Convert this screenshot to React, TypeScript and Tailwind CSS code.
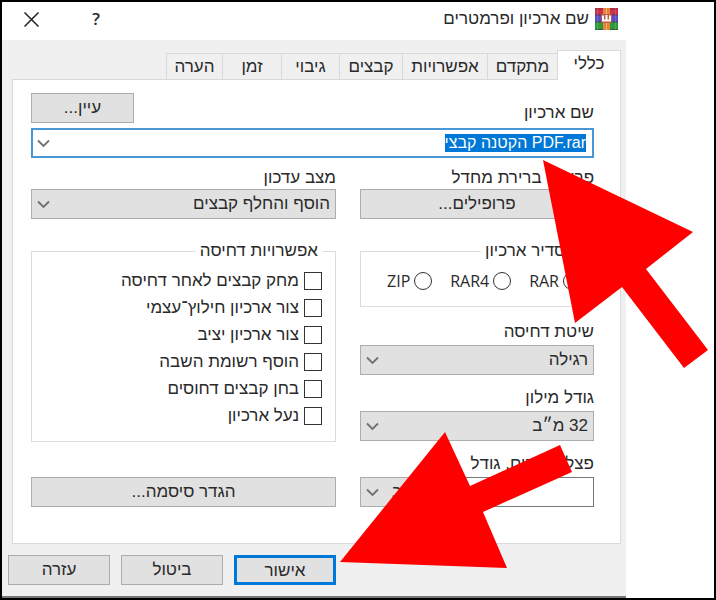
import { useEffect, useRef } from 'react';
import type { ReactNode } from 'react';
import { clsx } from 'clsx';

const TABS = [
  { label: 'כללי', width: 'w-16' },
  { label: 'מתקדם', width: 'w-[70px]' },
  { label: 'אפשרויות', width: 'w-[85px]' },
  { label: 'קבצים', width: 'w-[63px]' },
  { label: 'גיבוי', width: 'w-[58px]' },
  { label: 'זמן', width: 'w-[59px]' },
  { label: 'הערה', width: 'w-[56px]' },
];

const OPTIONS = [
  'מחק קבצים לאחר דחיסה',
  'צור ארכיון חילוץ־עצמי',
  'צור ארכיון יציב',
  'הוסף רשומת השבה',
  'בחן קבצים דחוסים',
  'נעל ארכיון',
];

const FORMATS = ['RAR', 'RAR4', 'ZIP'];

function ArchiveIcon() {
  return (
    <svg width="23" height="22" viewBox="0 0 23 22" aria-hidden="true">
      <rect width="23" height="7" fill="#c8324a" />
      <rect y="7" width="23" height="7" fill="#5a4fc0" />
      <rect y="14" width="23" height="8" fill="#2f9a3a" />
      <path d="M0 1h23" stroke="#7c2030" strokeOpacity="0.6" />
      <path d="M0 7h23M0 14h23M0 21.500h23" stroke="#1c1c4c" strokeOpacity="0.5" />
      <path d="M2.500 0v22M20.500 0v22" stroke="#ffffff" strokeOpacity="0.15" />
      <rect x="8" width="7" height="22" fill="#e8843a" />
      <path d="M11.500 0v22" stroke="#f6b070" />
      <rect x="6" y="6" width="11" height="9" rx="1" fill="#c05a48" />
      <path d="M8 7.500v5h7v-5M11.500 7v5" fill="none" stroke="#ffffff" strokeWidth="2" />
    </svg>
  );
}

function Chevron() {
  return (
    <svg
      className="pointer-events-none absolute inset-y-0 left-1.5 my-auto"
      width="13"
      height="9"
      viewBox="0 0 13 9"
      fill="none"
      stroke="#707070"
      strokeWidth="1.8"
      aria-hidden="true"
    >
      <path d="M1 1.500 6.500 7 12 1.500" />
    </svg>
  );
}

function Combo({ id, value, label }: { id: string; value: string; label?: string }) {
  return (
    <div className="relative">
      <select
        id={id}
        aria-label={label}
        className="block h-[30px] w-full appearance-none border border-[#adadad] bg-[#e1e1e1] pr-[5px] pl-6 outline-none"
      >
        <option>{value}</option>
      </select>
      <Chevron />
    </div>
  );
}

function Field({ id, label, children, spaced }: { id: string; label: string; children: ReactNode; spaced?: boolean }) {
  return (
    <div>
      <label
        htmlFor={id}
        className={clsx('block leading-5 whitespace-nowrap', spaced ? 'h-[23px]' : 'h-[21px]')}
      >
        {label}
      </label>
      {children}
    </div>
  );
}

function Button({ children, className, id }: { children: ReactNode; className?: string; id?: string }) {
  return (
    <button
      id={id}
      type="button"
      className={clsx('h-[30px] bg-[#e1e1e1]', className)}
    >
      {children}
    </button>
  );
}

function Arrows() {
  return (
    <svg
      className="pointer-events-none absolute -top-0.5 -left-0.5"
      width="716"
      height="600"
      viewBox="0 0 716 600"
      fill="#ff0000"
      aria-hidden="true"
    >
      <polygon points="543,160 693,232 646,269 708,350 684,368 622,287 575,323" />
      <polygon points="340,562 445,432 470,486 560,445 572,472 483,512 507,568" />
    </svg>
  );
}

export default function App() {
  const nameRef = useRef<HTMLInputElement>(null);

  useEffect(() => {
    nameRef.current?.focus();
    nameRef.current?.select();
  }, []);

  return (
    <div className="relative min-h-screen border-2 border-black bg-white font-['Liberation_Sans',Arial,sans-serif] text-[17px] text-[#2a2a2a]">
      <div dir="rtl" className="mr-[88px] border-b-2 border-[#777] bg-[#f0f0f0]">
        {/* Title bar */}
        <header className="flex h-[38px] items-center bg-white pr-2 pb-1 pl-[22px]">
          <ArchiveIcon />
          <h1 className="mr-1.5 flex-1 whitespace-nowrap">שם ארכיון ופרמטרים</h1>
          <button type="button" aria-label="עזרה" className="w-4 font-['Open_Sans'] font-semibold">
            ?
          </button>
          <button type="button" aria-label="סגור" className="mr-[49px]">
            <svg width="15" height="15" viewBox="0 0 15 15" stroke="#222" strokeWidth="1.500">
              <path d="M.5.5l14 14M14.500.5l-14 14" />
            </svg>
          </button>
        </header>

        <main className="pt-2.5 pr-[5px] pl-2.5">
          {/* Tabs */}
          <div role="tablist" className="flex items-end">
            {TABS.map((tab, i) => (
              <button
                key={tab.label}
                type="button"
                role="tab"
                aria-selected={i === 0}
                className={clsx(
                  'border-[#d9d9d9] leading-5 whitespace-nowrap',
                  tab.width,
                  i === 0
                    ? 'z-10 -mb-px h-[30px] border-x border-t bg-white pb-1'
                    : 'h-[26px] border-t border-l bg-[#f0f0f0]'
                )}
              >
                {tab.label}
              </button>
            ))}
          </div>

          {/* Panel */}
          <section className="border border-[#d9d9d9] bg-white pt-[13px] pr-[26px] pb-9 pl-[18px]">
            <div className="flex items-start justify-between">
              <label htmlFor="name" className="pt-2.5 leading-5">שם ארכיון</label>
              <Button className="w-[103px] border border-[#adadad]">עיין...</Button>
            </div>
            <div className="relative mt-[5px]">
              <input
                id="name"
                ref={nameRef}
                defaultValue="PDF.rar הקטנה קבצי"
                className="block h-[30px] w-full border-2 border-[#4a97d6] bg-white pr-1.5 pl-6 text-base leading-5 outline-none selection:bg-[#0078d7] selection:text-white"
              />
              <Chevron />
            </div>

            <div className="mt-2.5 grid grid-cols-[234fr_305fr] gap-6">
              {/* Right column */}
              <div className="flex min-w-0 flex-col">
                <Field id="profiles" label="פרופיל ברירת מחדל">
                  <Button id="profiles" className="w-full border border-[#adadad]">פרופילים...</Button>
                </Field>

                <fieldset className="mt-[22px] mb-[15px] h-[66px] border border-[#dcdcdc] px-3">
                  <legend className="h-5 px-1 leading-5">תסדיר ארכיון</legend>
                  <div className="flex justify-between pt-2.5 pl-3.5 font-['Open_Sans'] text-base">
                    {FORMATS.map((format) => (
                      <label key={format} className="flex items-center gap-1 leading-5">
                        <input
                          type="radio"
                          name="format"
                          className="size-[18px] appearance-none rounded-full border border-[#333] bg-white"
                        />
                        {format}
                      </label>
                    ))}
                  </div>
                </fieldset>

                <div className="flex flex-col gap-[13px]">
                  <Field id="method" label="שיטת דחיסה" spaced>
                    <Combo id="method" value="רגילה" />
                  </Field>
                  <Field id="dictionary" label="גודל מילון" spaced>
                    <Combo id="dictionary" value="32 מ״ב" />
                  </Field>
                  <Field id="volume" label="פצל לכרכים, גודל" spaced>
                    <div className="flex">
                      <input id="volume" className="h-[30px] min-w-0 flex-1 border border-[#777] bg-white px-1.5 outline-none" />
                      <div className="w-[70px]">
                        <Combo id="unit" value="מ״ב" label="יחידה" />
                      </div>
                    </div>
                  </Field>
                </div>
              </div>

              {/* Left column */}
              <div className="flex min-w-0 flex-col">
                <Field id="update" label="מצב עדכון">
                  <Combo id="update" value="הוסף והחלף קבצים" />
                </Field>

                <fieldset className="mt-[22px] border border-[#dcdcdc] px-[13px] pb-3">
                  <legend className="h-5 px-1 leading-5">אפשרויות דחיסה</legend>
                  <div className="pt-1.5">
                    {OPTIONS.map((option) => (
                      <label key={option} className="flex h-[27px] items-center gap-[5px] whitespace-nowrap">
                        <input
                          type="checkbox"
                          className="size-[18px] appearance-none border border-[#333] bg-white"
                        />
                        {option}
                      </label>
                    ))}
                  </div>
                </fieldset>

                <Button className="mt-auto w-full border border-[#adadad]">הגדר סיסמה...</Button>
              </div>
            </div>
          </section>
        </main>

        <footer className="flex justify-end gap-[11px] py-[11px] pl-1.5">
          <Button className="w-[102px] border-[3px] border-[#0078d7]">אישור</Button>
          <Button className="w-[102px] border border-[#adadad]">ביטול</Button>
          <Button className="w-[102px] border border-[#adadad]">עזרה</Button>
        </footer>
      </div>

      <Arrows />
    </div>
  );
}
